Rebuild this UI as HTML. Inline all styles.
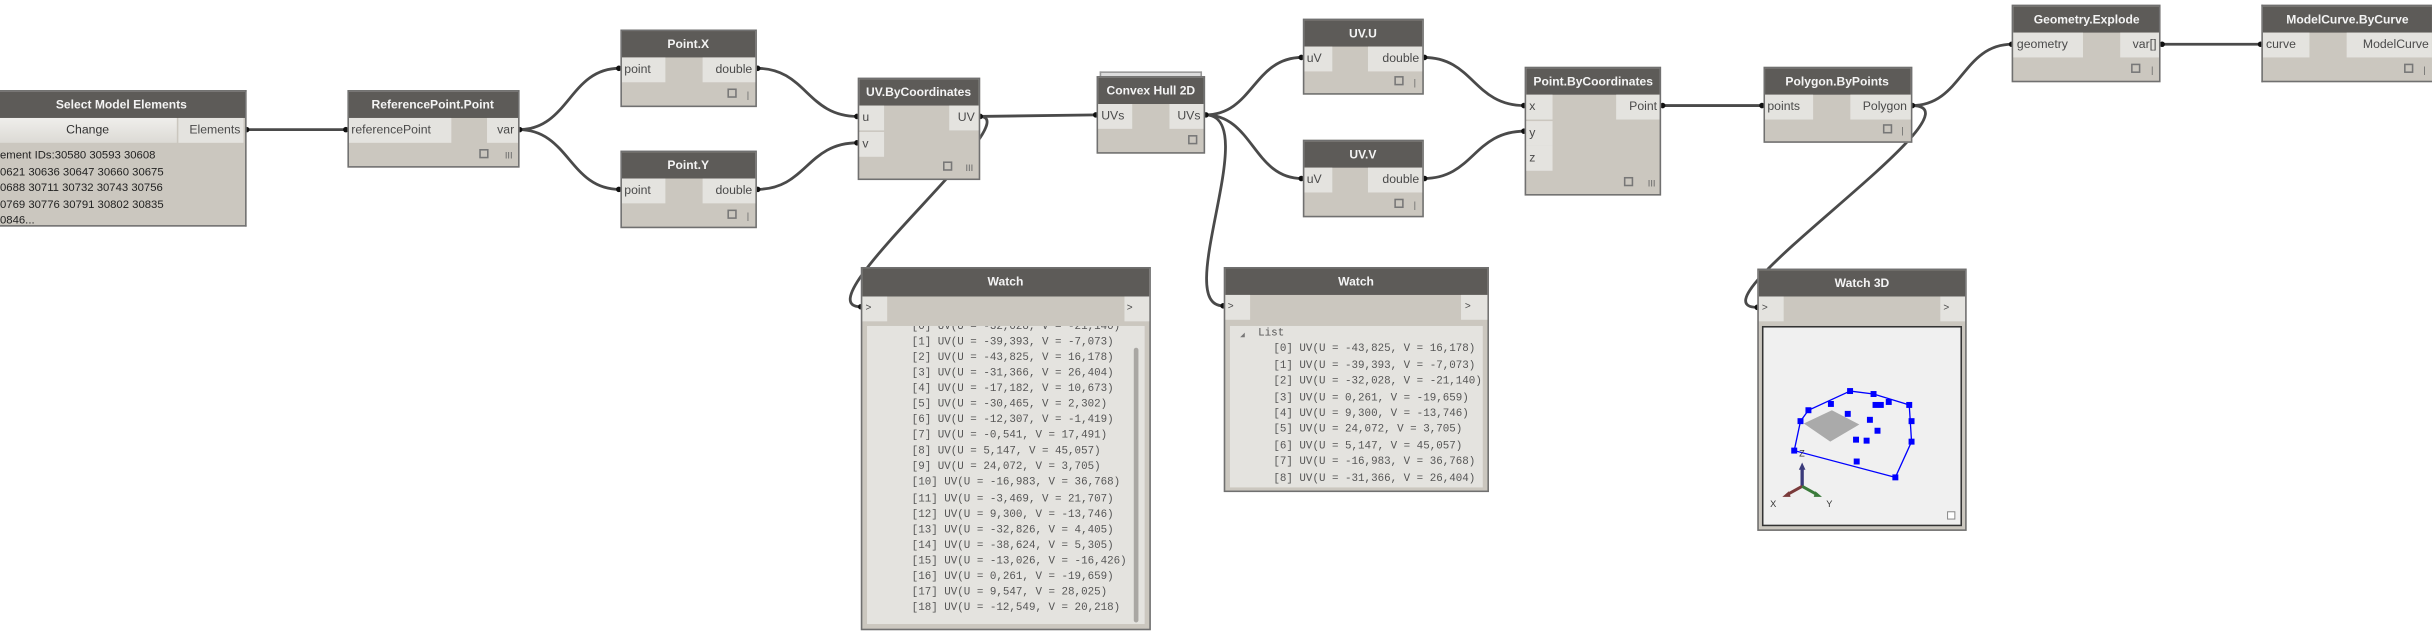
<!DOCTYPE html>
<html><head><meta charset="utf-8">
<style>
html,body{margin:0;padding:0;background:#fff;width:2432px;height:638px;overflow:hidden}
#w{position:absolute;left:0;top:0;width:1568px;height:411px;transform:scale(1.551,1.5523);transform-origin:0 0;font-family:"Liberation Sans",sans-serif}
.n{position:absolute;background:#cbc7bf;border:1px solid #707070;box-sizing:border-box;overflow:hidden}
.t{position:absolute;left:0;right:0;top:0;height:17px;background:#5d5b58;color:#f4f4f4;font-weight:bold;font-size:7.8px;text-align:center;line-height:17px;white-space:nowrap}
.p{position:absolute;background:#e4e3df;font-size:7.9px;color:#4a4a4a;line-height:16px;height:16px;padding:0 2px;box-sizing:border-box;white-space:nowrap}
.r{text-align:right}
.sq{position:absolute;width:4px;height:4px;border:1px solid #777;bottom:5px}
.lc{position:absolute;bottom:3px;font-size:6px;color:#666}
.wc{position:absolute;background:#e4e3df;overflow:hidden;font-family:"Liberation Mono",monospace;font-size:7px;color:#555;line-height:10.08px;white-space:pre}
svg{position:absolute;left:0;top:0}
</style></head><body><div id="w">

<svg width="1568" height="411" viewBox="0 0 1568 411">
<g fill="none" stroke="#4a4a4a" stroke-width="1.8">
<path d="M158.5,83.5 L223.5,83.5"/>
<path d="M334.5,83.5 C367,83.5 367,44 399.5,44"/>
<path d="M334.5,83.5 C367,83.5 367,122 399.5,122"/>
<path d="M488,44 C520,44 520,75 553,75"/>
<path d="M488,122 C520,122 520,92 553,92"/>
<path d="M631.5,75 L707,74"/>
<path d="M631.5,75 C665,75 515,197.6 555,197.6"/>
<path d="M777,74 C808,74 808,37 839.5,37"/>
<path d="M777,74 C808,74 808,115 839.5,115"/>
<path d="M777,74 C815,74 755,197 788.6,197"/>
<path d="M918,37 C950,37 950,68 983,68"/>
<path d="M918,115 C950,115 950,84.5 983,84.5"/>
<path d="M1071.4,68 L1136.5,68"/>
<path d="M1232.6,68 C1265,68 1265,28.5 1297.4,28.5"/>
<path d="M1232.6,68 C1285,68 1085,198 1133,198"/>
<path d="M1393.4,28.5 L1458,28.5"/>
</g>
<g fill="#111">
<circle cx="159" cy="83.5" r="1.8"/><circle cx="223" cy="83.5" r="1.8"/>
<circle cx="335" cy="83.5" r="1.8"/><circle cx="399" cy="44" r="1.8"/><circle cx="399" cy="122" r="1.8"/>
<circle cx="488.5" cy="44" r="1.8"/><circle cx="488.5" cy="122" r="1.8"/>
<circle cx="552.5" cy="75" r="1.8"/><circle cx="552.5" cy="92" r="1.8"/>
<circle cx="632" cy="75" r="1.8"/><circle cx="706.5" cy="74" r="1.8"/>
<circle cx="777.5" cy="74" r="1.8"/><circle cx="839" cy="37" r="1.8"/><circle cx="839" cy="115" r="1.8"/>
<circle cx="918.5" cy="37" r="1.8"/><circle cx="918.5" cy="115" r="1.8"/>
<circle cx="982.5" cy="68" r="1.8"/><circle cx="982.5" cy="84.5" r="1.8"/>
<circle cx="1072" cy="68" r="1.8"/><circle cx="1136" cy="68" r="1.8"/>
<circle cx="1233" cy="68" r="1.8"/><circle cx="1297" cy="28.5" r="1.8"/>
<circle cx="1394" cy="28.5" r="1.8"/><circle cx="1457.5" cy="28.5" r="1.8"/>
<circle cx="555" cy="197.6" r="1.8"/><circle cx="788.6" cy="197" r="1.8"/><circle cx="1133" cy="198" r="1.8"/>
</g>
</svg>

<div class="n" style="left:-1px;top:58px;width:159.5px;height:88px;border-left:none">
<div class="t">Select Model Elements</div>
<div class="p" style="left:0;top:17px;width:115px;text-align:center;background:linear-gradient(#efeeeb,#dcdad5);color:#333">Change</div>
<div class="p r" style="left:116px;top:17px;width:42px">Elements</div>
<div style="position:absolute;left:1px;top:36px;font-size:7.3px;line-height:10.5px;color:#222;white-space:pre">ement IDs:30580 30593 30608
0621 30636 30647 30660 30675
0688 30711 30732 30743 30756
0769 30776 30791 30802 30835
0846...</div>
</div>

<div class="n" style="left:223.5px;top:58px;width:111px;height:50px">
<div class="t">ReferencePoint.Point</div>
<div class="p" style="left:0;top:17px;width:66px">referencePoint</div>
<div class="p r" style="right:0;top:17px;width:20px">var</div>
<div class="sq" style="right:19px"></div><div class="lc" style="right:3px">III</div>
</div>

<div class="n" style="left:399.5px;top:18.7px;width:88.5px;height:50px">
<div class="t">Point.X</div>
<div class="p" style="left:0;top:17px;width:28px">point</div>
<div class="p r" style="right:0;top:17px;width:34.5px">double</div>
<div class="sq" style="right:12px"></div><div class="lc" style="right:4px">|</div>
</div>

<div class="n" style="left:399.5px;top:97px;width:88.5px;height:50px">
<div class="t">Point.Y</div>
<div class="p" style="left:0;top:17px;width:28px">point</div>
<div class="p r" style="right:0;top:17px;width:34.5px">double</div>
<div class="sq" style="right:12px"></div><div class="lc" style="right:4px">|</div>
</div>

<div class="n" style="left:553px;top:50px;width:78.5px;height:66px">
<div class="t">UV.ByCoordinates</div>
<div class="p" style="left:0;top:17px;width:16px">u</div>
<div class="p" style="left:0;top:34px;width:16px">v</div>
<div class="p r" style="right:0;top:17px;width:18.5px">UV</div>
<div class="sq" style="right:17px"></div><div class="lc" style="right:3px">III</div>
</div>

<div style="position:absolute;left:709px;top:46px;width:66px;height:4px;border:1px solid #999;border-bottom:none;background:#ddd;box-sizing:border-box"></div>
<div class="n" style="left:707px;top:49px;width:70px;height:50px">
<div class="t">Convex Hull 2D</div>
<div class="p" style="left:0;top:17px;width:22px">UVs</div>
<div class="p r" style="right:0;top:17px;width:22px">UVs</div>
<div class="sq" style="right:4px"></div>
</div>

<div class="n" style="left:839.5px;top:12px;width:78.5px;height:49.4px">
<div class="t">UV.U</div>
<div class="p" style="left:0;top:17px;width:18px">uV</div>
<div class="p r" style="right:0;top:17px;width:35px">double</div>
<div class="sq" style="right:12px"></div><div class="lc" style="right:4px">|</div>
</div>

<div class="n" style="left:839.5px;top:90px;width:78.5px;height:50px">
<div class="t">UV.V</div>
<div class="p" style="left:0;top:17px;width:18px">uV</div>
<div class="p r" style="right:0;top:17px;width:35px">double</div>
<div class="sq" style="right:12px"></div><div class="lc" style="right:4px">|</div>
</div>

<div class="n" style="left:983px;top:43px;width:88.4px;height:83px">
<div class="t">Point.ByCoordinates</div>
<div class="p" style="left:0;top:17px;width:17px;height:16px">x</div>
<div class="p" style="left:0;top:33.5px;width:17px;height:16px">y</div>
<div class="p" style="left:0;top:50px;width:17px;height:16px">z</div>
<div class="p r" style="right:0;top:17px;width:28px">Point</div>
<div class="sq" style="right:17px"></div><div class="lc" style="right:3px">III</div>
</div>

<div class="n" style="left:1136.5px;top:43px;width:96px;height:49.4px">
<div class="t">Polygon.ByPoints</div>
<div class="p" style="left:0;top:17px;width:31.5px">points</div>
<div class="p r" style="right:0;top:17px;width:38.6px">Polygon</div>
<div class="sq" style="right:12px"></div><div class="lc" style="right:4px">|</div>
</div>

<div class="n" style="left:1297.4px;top:3.2px;width:96px;height:49.6px">
<div class="t">Geometry.Explode</div>
<div class="p" style="left:0;top:17px;width:44.6px">geometry</div>
<div class="p r" style="right:0;top:17px;width:25.4px">var[]</div>
<div class="sq" style="right:12px"></div><div class="lc" style="right:4px">|</div>
</div>

<div class="n" style="left:1458px;top:3.2px;width:110px;height:49.6px;border-right:none">
<div class="t">ModelCurve.ByCurve</div>
<div class="p" style="left:0;top:17px;width:30px">curve</div>
<div class="p r" style="right:0;top:17px;width:55px">ModelCurve</div>
<div class="sq" style="right:12px"></div><div class="lc" style="right:4px">|</div>
</div>

<div class="n" style="left:555px;top:172px;width:186.5px;height:233.6px">
<div class="t" style="height:17.6px;line-height:17.6px">Watch</div>
<div class="p" style="left:0;top:17.6px;width:16px;font-size:6.5px">&gt;</div>
<div class="p" style="right:0;top:17.6px;width:16px;font-size:6.5px">&gt;</div>
<div class="wc" style="left:3px;top:37px;width:178.5px;height:191.7px">
<div style="position:absolute;left:28.8px;top:-4.3px">[0] UV(U = -32,028, V = -21,140)
[1] UV(U = -39,393, V = -7,073)
[2] UV(U = -43,825, V = 16,178)
[3] UV(U = -31,366, V = 26,404)
[4] UV(U = -17,182, V = 10,673)
[5] UV(U = -30,465, V = 2,302)
[6] UV(U = -12,307, V = -1,419)
[7] UV(U = -0,541, V = 17,491)
[8] UV(U = 5,147, V = 45,057)
[9] UV(U = 24,072, V = 3,705)
[10] UV(U = -16,983, V = 36,768)
[11] UV(U = -3,469, V = 21,707)
[12] UV(U = 9,300, V = -13,746)
[13] UV(U = -32,826, V = 4,405)
[14] UV(U = -38,624, V = 5,305)
[15] UV(U = -13,026, V = -16,426)
[16] UV(U = 0,261, V = -19,659)
[17] UV(U = 9,547, V = 28,025)
[18] UV(U = -12,549, V = 20,218)</div>
<div style="position:absolute;left:171.5px;top:14px;width:3.5px;height:177px;background:#a9a7a3;border-radius:2px"></div>
</div>
</div>

<div class="n" style="left:788.6px;top:171.5px;width:171.4px;height:145.5px">
<div class="t" style="height:17.2px;line-height:17.2px">Watch</div>
<div class="p" style="left:0;top:17.2px;width:16.5px;font-size:6.5px">&gt;</div>
<div class="p" style="right:0;top:17.2px;width:16.5px;font-size:6.5px">&gt;</div>
<div class="wc" style="left:3px;top:37px;width:163.6px;height:104.3px;line-height:10.4px">
<div style="position:absolute;left:7px;top:1px;font-size:5px;color:#777">◢</div>
<div style="position:absolute;left:18.6px;top:0.7px">List</div>
<div style="position:absolute;left:28.4px;top:10.9px">[0] UV(U = -43,825, V = 16,178)
[1] UV(U = -39,393, V = -7,073)
[2] UV(U = -32,028, V = -21,140)
[3] UV(U = 0,261, V = -19,659)
[4] UV(U = 9,300, V = -13,746)
[5] UV(U = 24,072, V = 3,705)
[6] UV(U = 5,147, V = 45,057)
[7] UV(U = -16,983, V = 36,768)
[8] UV(U = -31,366, V = 26,404)</div>
</div>
</div>

<div class="n" style="left:1133px;top:172.9px;width:135px;height:168.8px">
<div class="t" style="height:17.1px;line-height:17.1px">Watch 3D</div>
<div class="p" style="left:0;top:17.1px;width:16px;font-size:6.5px">&gt;</div>
<div class="p" style="right:0;top:17.1px;width:16px;font-size:6.5px">&gt;</div>
<div style="position:absolute;left:2px;top:36px;width:129px;height:129px;background:#f0f0f0;border:1px solid #333;box-sizing:border-box;overflow:hidden">
<svg width="127" height="127" viewBox="68 200 596 596">
<polygon points="190,490 275,450 358,493 270,545" fill="#aaa"/>
<polyline points="330,392 401,401 509,434 516,545 467,653 161,572 180,483 204,450 330,392" fill="none" stroke="#0000ff" stroke-width="4"/>
<g fill="#0000ff">
<rect x="321" y="383" width="18" height="18"/><rect x="392" y="392" width="18" height="18"/><rect x="500" y="425" width="18" height="18"/>
<rect x="507" y="474" width="18" height="18"/><rect x="507" y="536" width="18" height="18"/><rect x="458" y="644" width="18" height="18"/>
<rect x="152" y="563" width="18" height="18"/><rect x="171" y="474" width="18" height="18"/><rect x="195" y="441" width="18" height="18"/>
<rect x="263" y="422" width="18" height="18"/><rect x="314" y="452" width="18" height="18"/><rect x="381" y="470" width="18" height="18"/>
<rect x="404" y="503" width="18" height="18"/><rect x="339" y="530" width="18" height="18"/><rect x="371" y="533" width="18" height="18"/>
<rect x="341" y="596" width="18" height="18"/><rect x="398" y="425" width="34" height="18"/><rect x="438" y="416" width="18" height="18"/>
</g>
<line x1="185" y1="680" x2="185" y2="625" stroke="#3a3a7a" stroke-width="10"/>
<polygon points="175,630 195,630 185,608" fill="#3a3a7a"/>
<line x1="185" y1="680" x2="140" y2="705" stroke="#7a3a3a" stroke-width="9"/>
<polygon points="125,712 145,695 150,712" fill="#7a3a3a"/>
<line x1="185" y1="680" x2="230" y2="705" stroke="#3a7a3a" stroke-width="9"/>
<polygon points="245,712 225,695 220,712" fill="#3a7a3a"/>
<text x="176" y="590" font-size="28" font-family="Liberation Sans" fill="#333">Z</text>
<text x="88" y="742" font-size="28" font-family="Liberation Sans" fill="#333">X</text>
<text x="258" y="742" font-size="28" font-family="Liberation Sans" fill="#333">Y</text>
<rect x="625" y="757" width="22" height="22" fill="#fff" stroke="#888" stroke-width="3"/>
</svg>
</div>
</div>

</div></body></html>
